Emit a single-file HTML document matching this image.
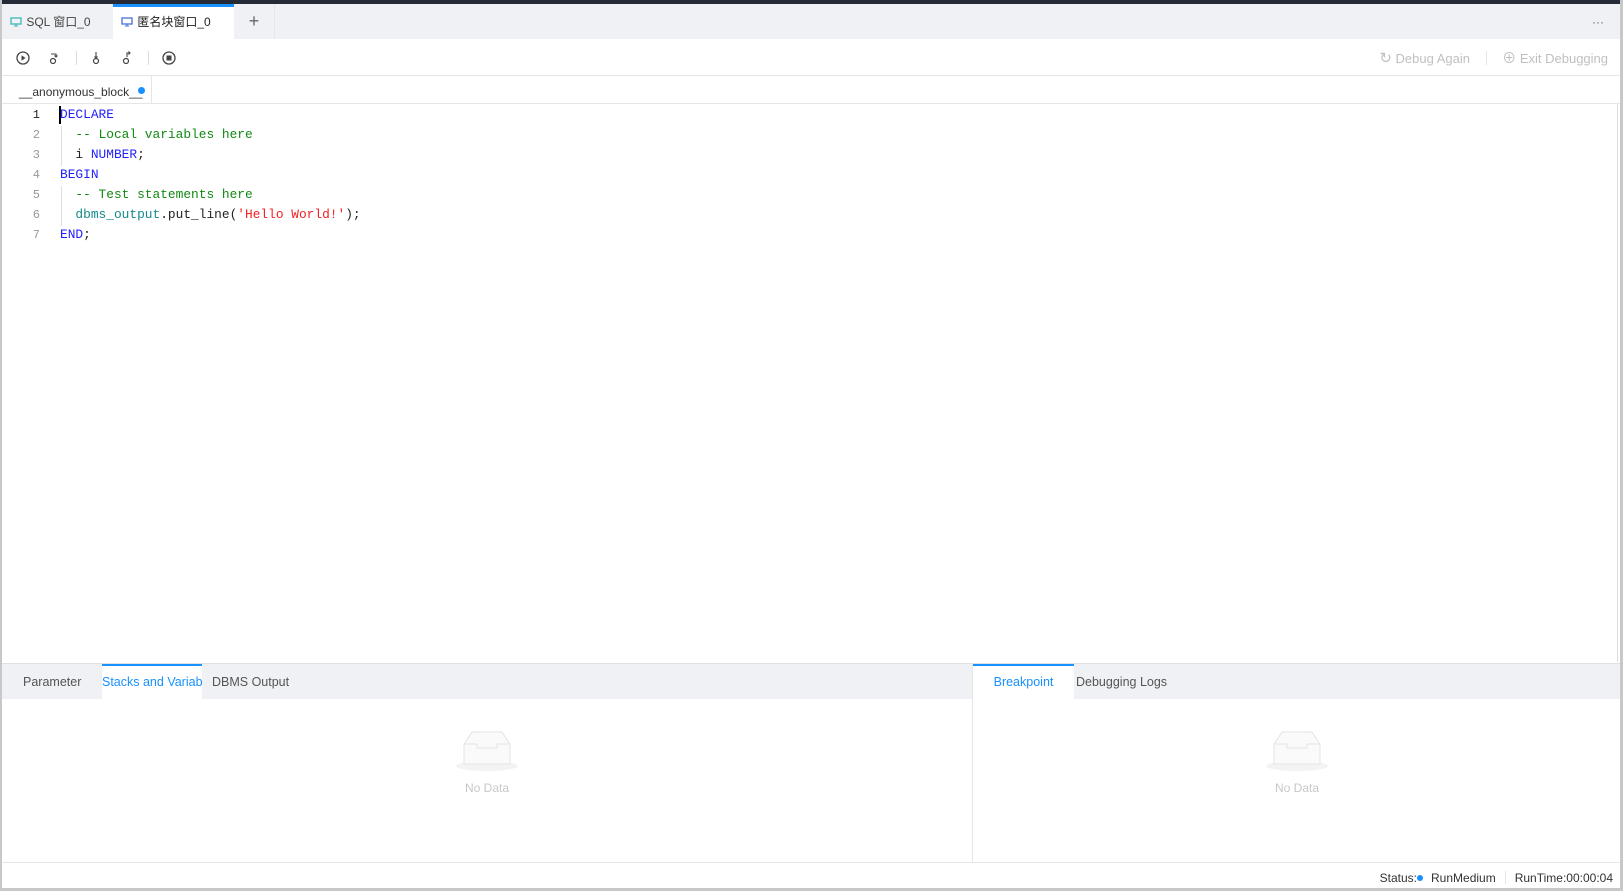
<!DOCTYPE html>
<html><head><meta charset="utf-8"><style>
*{box-sizing:border-box;margin:0;padding:0}
body{width:1623px;height:891px;position:relative;overflow:hidden;background:#c8c8c8;font-family:"Liberation Sans","Noto Sans CJK SC",sans-serif;font-size:13px;color:#333}
.abs{position:absolute}
#frame{left:2px;top:0;width:1618px;height:888px;background:#fff}
#topbar{left:2px;top:0;width:1618px;height:4px;background:#252a37}
#tabs{left:2px;top:4px;width:1618px;height:35px;background:#eff1f5}
.tab{position:absolute;top:0;height:35px;line-height:37px;font-size:12px;color:#333}
.mono{font-family:"Liberation Mono",monospace;font-size:12.85px;white-space:pre}
.ln{position:absolute;left:10px;width:30px;text-align:right;color:#999;font-family:"Liberation Mono",monospace;font-size:12px;line-height:20px}
.kw{color:#1f1fff}.cm{color:#118a11}.fn{color:#148a8a}.st{color:#f51f1f}
.guide{position:absolute;left:61px;width:1px;background:#ddd}
.ptab{position:absolute;top:0;height:35px;line-height:36px;font-size:12.5px;color:#555;white-space:nowrap}
.nodata{position:absolute;text-align:center;color:#c8c8c8;font-size:12px;width:100px}
</style></head><body>
<div class="abs" id="frame"></div>
<div class="abs" id="topbar"></div>
<div class="abs" id="tabs">
 <div class="tab" style="left:8px;width:105px">
  <svg width="12" height="10" style="vertical-align:-1px" viewBox="0 0 12 10"><rect x="1" y="1" width="10" height="6" fill="none" stroke="#3cb9b9" stroke-width="1.3"/><path d="M4 9h4M6 7v2" stroke="#3cb9b9"/></svg>
  <span style="margin-left:1px;color:#444">SQL 窗口_0</span></div>
 <div class="tab" style="left:111px;width:121px;background:#fff;border-top:3px solid #1890ff;line-height:31px;padding-left:8px">
  <svg width="12" height="10" style="vertical-align:-1px" viewBox="0 0 12 10"><rect x="1" y="1" width="10" height="6" fill="none" stroke="#4a6fd6" stroke-width="1.3"/><path d="M4 9h4M6 7v2" stroke="#4a6fd6"/></svg>
  <span style="margin-left:1px;color:#222">匿名块窗口_0</span></div>
 <div class="tab" style="left:232px;width:41px;text-align:center;font-size:18px;color:#666;line-height:34px;border-right:1px solid #e4e6ea">+</div>
 <div class="tab" style="left:1590px;color:#666">···</div>
</div>
<!-- toolbar -->
<div class="abs" style="left:2px;top:39px;width:1618px;height:37px;border-bottom:1px solid #e6e6e6">
 <svg class="abs" style="left:13px;top:11px" width="16" height="16" viewBox="0 0 16 16"><circle cx="8" cy="8" r="6" fill="none" stroke="#444" stroke-width="1.3"/><path d="M6.5 5.2v5.6L10.5 8z" fill="#444"/></svg>
 <svg class="abs" style="left:46px;top:11px" width="12" height="16" viewBox="0 0 12 16"><circle cx="5" cy="11" r="2.5" fill="none" stroke="#444" stroke-width="1.2"/><path d="M3 4h5v3M6.5 5.5L8 7l1.5-1.5" fill="none" stroke="#444" stroke-width="1.1"/></svg>
 <div class="abs" style="left:74px;top:12px;width:1px;height:14px;background:#ddd"></div>
 <svg class="abs" style="left:88px;top:11px" width="12" height="16" viewBox="0 0 12 16"><circle cx="6" cy="11" r="2.5" fill="none" stroke="#444" stroke-width="1.2"/><path d="M6 2v6M4.5 6.5L6 8l1.5-1.5" fill="none" stroke="#444" stroke-width="1.1"/></svg>
 <svg class="abs" style="left:119px;top:11px" width="12" height="16" viewBox="0 0 12 16"><circle cx="5" cy="11" r="2.5" fill="none" stroke="#444" stroke-width="1.2"/><path d="M6 7V3h3M7.5 1.5L9 3 7.5 4.5" fill="none" stroke="#444" stroke-width="1.1"/></svg>
 <div class="abs" style="left:146px;top:12px;width:1px;height:14px;background:#ddd"></div>
 <svg class="abs" style="left:159px;top:11px" width="16" height="16" viewBox="0 0 16 16"><circle cx="8" cy="8" r="6" fill="none" stroke="#444" stroke-width="1.3"/><rect x="5.5" y="5.5" width="5" height="5" fill="#444"/></svg>
 <div class="abs" style="right:12px;top:10px;font-size:13px;color:#c0c0c0;line-height:18px;white-space:nowrap">
  <span style="font-size:15px">&#x21BB;</span> Debug Again
  <span style="display:inline-block;width:1px;height:14px;background:#e6e6e6;margin:0 12px;vertical-align:-2px"></span>
  <span style="font-size:14px">&#x2295;</span> Exit Debugging</div>
</div>
<!-- editor tab -->
<div class="abs" style="left:2px;top:76px;width:1618px;height:28px;border-bottom:1px solid #e6e6e6">
 <div class="abs" style="left:0;top:0;width:150px;height:28px;border-right:1px solid #e6e6e6;font-size:12px;color:#333;line-height:32px;padding-left:17px">__anonymous_block__</div>
 <div class="abs" style="left:136px;top:11px;width:7px;height:7px;border-radius:50%;background:#1890ff"></div>
</div>
<!-- code -->
<div class="abs" style="left:1617px;top:104px;width:1px;height:558px;background:#ddd"></div>
<div class="guide" style="top:126px;height:40px"></div>
<div class="guide" style="top:186px;height:40px"></div>
<div class="abs" style="left:59px;top:106px;width:2px;height:18px;background:#000"></div>
<div class="abs" style="left:0;top:105px">
 <div class="ln" style="top:0;color:#222">1</div><div class="ln" style="top:20px">2</div><div class="ln" style="top:40px">3</div><div class="ln" style="top:60px">4</div><div class="ln" style="top:80px">5</div><div class="ln" style="top:100px">6</div><div class="ln" style="top:120px">7</div>
 <div class="abs mono" style="left:60px;top:0;line-height:20px;color:#222"><span class="kw">DECLARE</span>
  <span class="cm">-- Local variables here</span>
  i <span class="kw">NUMBER</span>;
<span class="kw">BEGIN</span>
  <span class="cm">-- Test statements here</span>
  <span class="fn">dbms_output</span>.put_line(<span class="st">'Hello World!'</span>);
<span class="kw">END</span>;</div>
</div>
<!-- bottom panels -->
<div class="abs" style="left:2px;top:663px;width:1618px;height:1px;background:#dde0e5"></div>
<div class="abs" style="left:2px;top:664px;width:1618px;height:35px;background:#eff1f5">
 <div class="ptab" style="left:21px">Parameter</div>
 <div class="ptab" style="left:100px;width:100px;background:#fff;border-top:2px solid #1890ff;color:#1890ff;line-height:33px;overflow:hidden">Stacks and Variab</div>
 <div class="ptab" style="left:210px">DBMS Output</div>
 <div class="abs" style="left:970px;top:0;width:1px;height:35px;background:#e6e6e6"></div>
 <div class="ptab" style="left:971px;width:101px;background:#fff;border-top:2px solid #1890ff;color:#1890ff;line-height:33px;text-align:center">Breakpoint</div>
 <div class="ptab" style="left:1074px">Debugging Logs</div>
</div>
<div class="abs" style="left:972px;top:699px;width:1px;height:163px;background:#e6e6e6"></div>
<svg class="abs" style="left:455px;top:730px" width="64" height="42" viewBox="0 0 64 42"><ellipse cx="32" cy="36" rx="31" ry="5" fill="#f3f3f3"/><path d="M9 14L17 2h30l8 12v20H9z" fill="#fafafa" stroke="#e4e4e4"/><path d="M9 14h13v4h20v-4h13" fill="none" stroke="#e4e4e4"/></svg>
<div class="nodata" style="left:437px;top:781px">No Data</div>
<svg class="abs" style="left:1265px;top:730px" width="64" height="42" viewBox="0 0 64 42"><ellipse cx="32" cy="36" rx="31" ry="5" fill="#f3f3f3"/><path d="M9 14L17 2h30l8 12v20H9z" fill="#fafafa" stroke="#e4e4e4"/><path d="M9 14h13v4h20v-4h13" fill="none" stroke="#e4e4e4"/></svg>
<div class="nodata" style="left:1247px;top:781px">No Data</div>
<!-- status -->
<div class="abs" style="left:2px;top:862px;width:1618px;height:1px;background:#e6e6e6"></div>
<div class="abs" style="right:10px;top:870px;font-size:12px;color:#333;line-height:16px;white-space:nowrap">Status:<span style="display:inline-block;width:6px;height:6px;border-radius:50%;background:#1890ff;margin:0 8px 1px 0"></span>RunMedium<span style="display:inline-block;width:1px;height:13px;background:#e6e6e6;margin:0 9px -2px 9px"></span>RunTime:00:00:04</div>
</body></html>
